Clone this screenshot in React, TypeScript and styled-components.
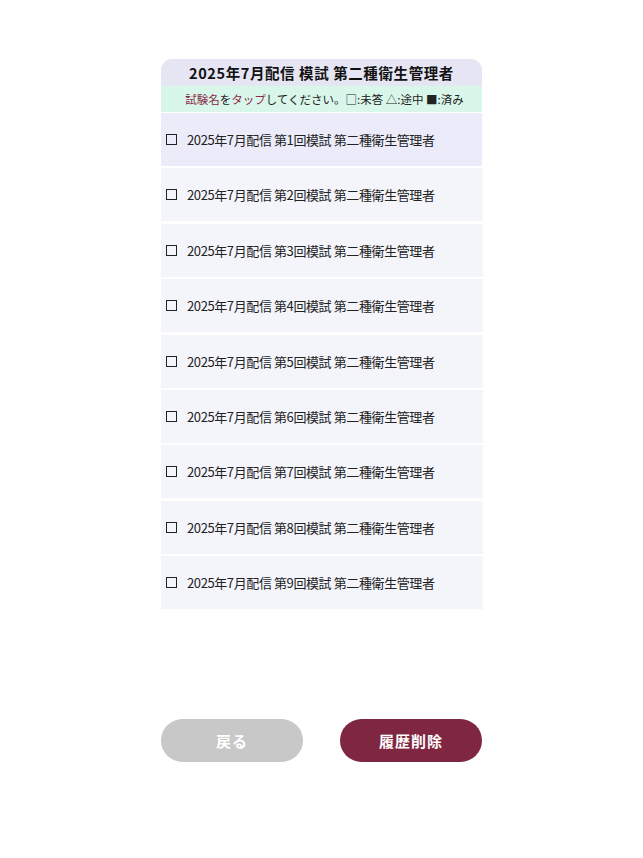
import React from "react";
import styled, { createGlobalStyle } from "styled-components";

const Global = createGlobalStyle`
  html, body { margin: 0; padding: 0; background: #ffffff; }
  body { font-family: "Noto Sans CJK JP", "Noto Sans", sans-serif; color: #222; }
`;

const Page = styled.div`
  width: 643px;
  min-height: 858px;
  display: flex;
  flex-direction: column;
  align-items: center;
  padding-top: 59px;
  box-sizing: border-box;
`;

const Panel = styled.div`
  width: 321px;
  display: flex;
  flex-direction: column;
`;

const Title = styled.div`
  height: 27px;
  background: #e6e5f4;
  border-radius: 11px 11px 0 0;
  display: flex;
  align-items: center;
  justify-content: center;
  font-size: 14.5px;
  font-weight: 700;
  letter-spacing: 0.6px;
  color: #111;
`;

const Banner = styled.div`
  height: 26px;
  background: #d9f6ea;
  display: flex;
  align-items: center;
  justify-content: center;
  font-size: 11.5px;
  color: #222;
  padding-left: 6px;
`;

const Accent = styled.span`
  color: #8a2a46;
`;

const List = styled.div`
  display: flex;
  flex-direction: column;
  gap: 2.4px;
  margin-top: 1px;
`;

const Row = styled.div<{ $active?: boolean }>`
  height: 53px;
  background: ${(p) => (p.$active ? "#ecebfa" : "#f4f4fb")};
  display: flex;
  align-items: center;
  padding-left: 5px;
  gap: 10px;
  font-size: 13px;
  letter-spacing: -0.4px;
  color: #222;
  box-shadow: ${(p) => (p.$active ? "none" : "1px 0 1px rgba(0,0,0,0.03)")};
`;

const Box = styled.span`
  width: 11px;
  height: 11px;
  border: 1.5px solid #222;
  box-sizing: border-box;
  flex: none;
`;

const Buttons = styled.div`
  width: 321px;
  display: flex;
  justify-content: space-between;
  margin-top: 110px;
`;

const Btn = styled.button<{ $primary?: boolean }>`
  width: 142px;
  height: 43px;
  border: none;
  border-radius: 22px;
  background: ${(p) => (p.$primary ? "#7f2640" : "#c8c8c8")};
  color: #ffffff;
  font-family: "Noto Sans CJK JP", "Noto Sans", sans-serif;
  font-size: 15px;
  font-weight: 700;
  letter-spacing: 1px;
  display: flex;
  align-items: center;
  justify-content: center;
  padding: 0;
`;

const items = [1, 2, 3, 4, 5, 6, 7, 8, 9];

export default function App() {
  return (
    <>
      <Global />
      <Page>
        <Panel>
          <Title>2025年7月配信 模試 第二種衛生管理者</Title>
          <Banner>
            <Accent>試験名</Accent>を<Accent>タップ</Accent>してください。□:未答 △:途中 ■:済み
          </Banner>
          <List>
            {items.map((n) => (
              <Row key={n} $active={n === 1}>
                <Box />
                <span>2025年7月配信 第{n}回模試 第二種衛生管理者</span>
              </Row>
            ))}
          </List>
        </Panel>
        <Buttons>
          <Btn>戻る</Btn>
          <Btn $primary>履歴削除</Btn>
        </Buttons>
      </Page>
    </>
  );
}
